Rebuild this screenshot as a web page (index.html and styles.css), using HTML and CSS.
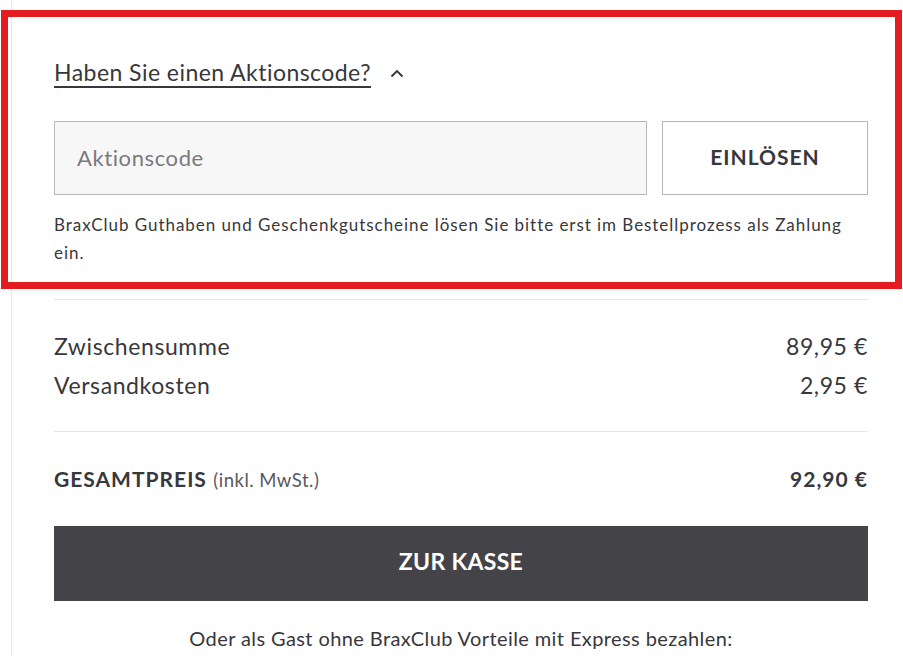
FILE: index.html
```html
<!DOCTYPE html>
<html lang="de">
<head>
<meta charset="utf-8">
<title>Warenkorb</title>
<link rel="stylesheet" href="styles.css">
</head>
<body>
<div class="page">
  <div class="panel">
    <section class="promo">
      <div class="promo-head">
        <span class="promo-title">Haben Sie einen Aktionscode?</span>
        <svg class="chevron" width="14" height="10" viewBox="0 0 14 10" aria-hidden="true"><path d="M1.5 8.5 L7 3 L12.5 8.5" fill="none" stroke="#333" stroke-width="1.8"/></svg>
      </div>
      <div class="promo-form">
        <input class="promo-input" type="text" placeholder="Aktionscode">
        <button class="promo-btn" type="button">EINLÖSEN</button>
      </div>
      <p class="promo-note">BraxClub Guthaben und Geschenkgutscheine lösen Sie bitte erst im Bestellprozess als Zahlung ein.</p>
    </section>
    <section class="sums">
      <div class="row"><span>Zwischensumme</span><span>89,95&nbsp;€</span></div>
      <div class="row"><span>Versandkosten</span><span>2,95&nbsp;€</span></div>
    </section>
    <section class="total">
      <div class="total-row"><span><strong>GESAMTPREIS</strong> <span class="vat">(inkl. MwSt.)</span></span><strong>92,90&nbsp;€</strong></div>
      <button class="checkout" type="button">ZUR KASSE</button>
      <p class="express">Oder als Gast ohne BraxClub Vorteile mit Express bezahlen:</p>
    </section>
  </div>
  <div class="highlight"></div>
</div>
</body>
</html>
```

FILE: styles.css
```css
* { box-sizing: border-box; }
html, body { margin: 0; padding: 0; background: #fff; }
body {
  font-family: "Lato", "Open Sans", sans-serif;
  color: #38373b;
  width: 903px;
  height: 656px;
  overflow: hidden;
}
.page { position: relative; height: 656px; }
.panel {
  margin-left: 11px;
  border-left: 1px solid #e6e6e6;
  padding: 0 35px 0 42px;
  height: 656px;
}
.promo { padding-top: 59px; }
.promo-head { display: flex; align-items: center; gap: 19px; }
.promo-title {
  font-size: 23px;
  line-height: 27px;
  letter-spacing: 0.45px;
  border-bottom: 2px solid #38373b;
}
.chevron { display: block; margin-top: -2px; }
.promo-form { display: flex; gap: 15px; margin-top: 33px; }
.promo-input {
  flex: 1;
  height: 74px;
  border: 1px solid #b7b7b7;
  background: #f7f7f7;
  padding: 0 22px 2px;
  font-family: inherit;
  font-size: 22px;
  letter-spacing: 0.6px;
  color: #38373b;
  outline: none;
}
.promo-input::placeholder { color: #7a797c; }
.promo-btn {
  width: 206px;
  height: 74px;
  padding: 0 0 3px;
  border: 1px solid #b7b7b7;
  background: #fff;
  font-family: inherit;
  font-size: 21px;
  font-weight: 700;
  color: #38373b;
  letter-spacing: 1px;
}
.promo-note {
  margin: 16px 0 0;
  font-size: 17px;
  line-height: 28px;
  letter-spacing: 0.95px;
}
.sums {
  margin-top: 32px;
  border-top: 1px solid #e6e6e6;
  border-bottom: 1px solid #e6e6e6;
  padding: 27px 0 26px;
}
.row {
  display: flex;
  justify-content: space-between;
  font-size: 23px;
  letter-spacing: 0.6px;
  line-height: 39px;
}
.total { padding-top: 33px; }
.total-row {
  display: flex;
  justify-content: space-between;
  align-items: baseline;
  font-size: 21px;
  letter-spacing: 1px;
  line-height: 28px;
}
.total-row strong { font-weight: 700; }
.vat { font-size: 18.5px; letter-spacing: 0.5px; color: #5a595d; }
.checkout {
  display: block;
  width: 100%;
  height: 75px;
  margin-top: 32px;
  padding: 0 0 5px;
  border: 0;
  background: #444348;
  color: #fff;
  font-family: inherit;
  font-size: 23px;
  letter-spacing: 0.3px;
  font-weight: 700;
}
.express {
  margin: 23px 0 0;
  text-align: center;
  font-size: 20px;
  letter-spacing: 0.4px;
  line-height: 28px;
}
.highlight {
  position: absolute;
  left: 1px;
  top: 10px;
  width: 901px;
  height: 279px;
  border: 7px solid #e31c1f;
  pointer-events: none;
}
```
